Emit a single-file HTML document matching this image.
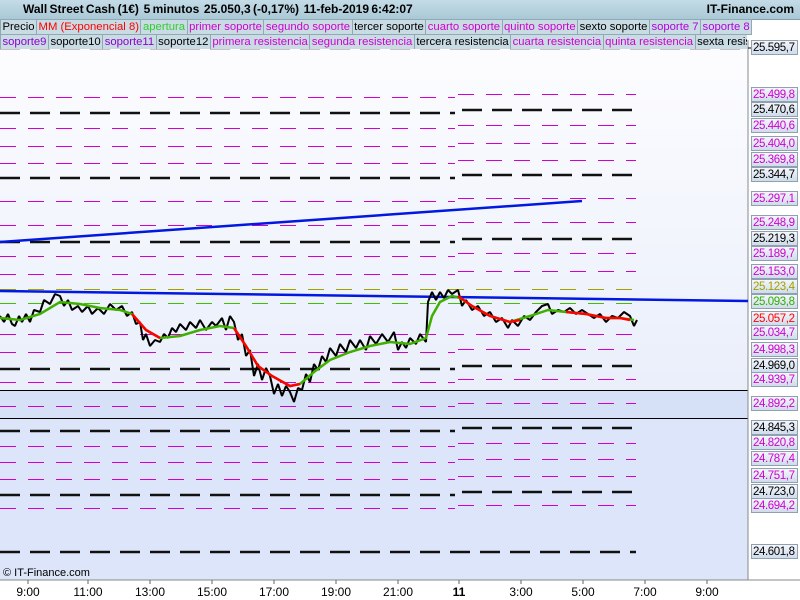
<!DOCTYPE html>
<html><head><meta charset="utf-8"><style>
body{margin:0;width:800px;height:600px;overflow:hidden;font-family:"Liberation Sans",sans-serif;background:#fff;position:relative}
#title{position:absolute;left:0;top:0;width:800px;height:19px;background:linear-gradient(#c4dce6,#a9c8d6);font-weight:bold;font-size:12px;line-height:19px;border-bottom:1px solid #7f9ea8}
.row{position:absolute;left:0;height:15px;font-size:11.3px;line-height:15px;white-space:nowrap}
.row span{display:inline-block;background:#c9dbe3;border:1px solid #8faab4;padding:0 1.5px;margin-right:-1px;height:14px}
.ax{position:absolute;left:751px;width:47px;height:15px;font-size:11.5px;letter-spacing:-0.4px;line-height:15px;text-align:left;padding-left:1px;background:linear-gradient(#f4f6fb,#cfdceb);border:1px solid #8fa0b0;box-sizing:border-box;white-space:nowrap}
.t{position:absolute;top:585px;font-size:12px;transform:translateX(-50%)}
</style></head><body>
<svg width="800" height="600" style="position:absolute;left:0;top:0">
<defs><linearGradient id="bg" x1="0" y1="0" x2="0" y2="1"><stop offset="0" stop-color="#fdfdff"/><stop offset="1" stop-color="#dfe7f8"/></linearGradient></defs>
<rect x="0" y="40" width="748" height="540" fill="url(#bg)"/>
<rect x="0" y="390" width="748" height="28" fill="#d6e1f8"/>
<rect x="0" y="418" width="748" height="162" fill="#dce5f9"/>
<line x1="0" y1="390.5" x2="748" y2="390.5" stroke="#000"/>
<line x1="0" y1="418.5" x2="748" y2="418.5" stroke="#000"/>
<rect x="747.5" y="40" width="1" height="540" fill="#888"/>
<rect x="0" y="579.5" width="800" height="1" fill="#888"/>
<g fill="none">
<g stroke="#111" stroke-width="2.5" stroke-dasharray="20,10">
<line x1="0" y1="48" x2="748" y2="48"/>
<line x1="0" y1="113" x2="455" y2="113"/><line x1="462" y1="110" x2="636" y2="110"/>
<line x1="0" y1="178" x2="455" y2="178"/><line x1="462" y1="175" x2="636" y2="175"/>
<line x1="0" y1="242" x2="455" y2="242"/><line x1="462" y1="239" x2="636" y2="239"/>
<line x1="0" y1="369" x2="455" y2="369"/><line x1="462" y1="366" x2="636" y2="366"/>
<line x1="0" y1="431" x2="455" y2="431"/><line x1="462" y1="428" x2="636" y2="428"/>
<line x1="0" y1="495" x2="455" y2="495"/><line x1="462" y1="492" x2="636" y2="492"/>
<line x1="0" y1="552" x2="636" y2="552"/>
</g>
<g stroke="#d000d0" stroke-width="1" stroke-dasharray="16,12">
<line x1="0" y1="97.5" x2="455" y2="97.5"/><line x1="458" y1="94.5" x2="636" y2="94.5"/>
<line x1="0" y1="128.5" x2="455" y2="128.5"/><line x1="458" y1="125.5" x2="636" y2="125.5"/>
<line x1="0" y1="146.5" x2="455" y2="146.5"/><line x1="458" y1="143.5" x2="636" y2="143.5"/>
<line x1="0" y1="163.5" x2="455" y2="163.5"/><line x1="458" y1="160.5" x2="636" y2="160.5"/>
<line x1="0" y1="201.5" x2="455" y2="201.5"/><line x1="458" y1="198.5" x2="636" y2="198.5"/>
<line x1="0" y1="225.5" x2="455" y2="225.5"/><line x1="458" y1="222.5" x2="636" y2="222.5"/>
<line x1="0" y1="256.5" x2="455" y2="256.5"/><line x1="458" y1="253.5" x2="636" y2="253.5"/>
<line x1="0" y1="274.5" x2="455" y2="274.5"/><line x1="458" y1="271.5" x2="636" y2="271.5"/>
<line x1="0" y1="334.5" x2="636" y2="334.5"/>
<line x1="0" y1="352.5" x2="455" y2="352.5"/><line x1="458" y1="349.5" x2="636" y2="349.5"/>
<line x1="0" y1="382.5" x2="455" y2="382.5"/><line x1="458" y1="379.5" x2="636" y2="379.5"/>
<line x1="0" y1="406.5" x2="455" y2="406.5"/><line x1="458" y1="403.5" x2="636" y2="403.5"/>
<line x1="0" y1="446.5" x2="455" y2="446.5"/><line x1="458" y1="443.5" x2="636" y2="443.5"/>
<line x1="0" y1="462.5" x2="455" y2="462.5"/><line x1="458" y1="459.5" x2="636" y2="459.5"/>
<line x1="0" y1="479.5" x2="455" y2="479.5"/><line x1="458" y1="476.5" x2="636" y2="476.5"/>
<line x1="0" y1="508.5" x2="455" y2="508.5"/><line x1="458" y1="505.5" x2="636" y2="505.5"/>
</g>
<line x1="0" y1="289.5" x2="636" y2="289.5" stroke="#a0a000" stroke-dasharray="16,12"/>
<line x1="0" y1="303.5" x2="636" y2="303.5" stroke="#40c000" stroke-dasharray="16,12"/>
<line x1="0" y1="242" x2="582" y2="201" stroke="#0018e0" stroke-width="2.5"/>
<line x1="0" y1="291" x2="748" y2="301" stroke="#0018e0" stroke-width="2.5"/>
<polyline stroke="#000" stroke-width="2" stroke-linejoin="bevel" points="0,316 4,322 8,314 12,324 15,326 19,316 22,322 26,314 30,322 34,310 40,312 44,300 50,304 55,294 60,296 64,306 68,300 72,310 78,306 82,312 88,306 92,314 98,308 104,314 110,304 116,310 122,306 127,316 132,312 136,324 140,322 143,340 146,334 150,346 155,340 160,342 164,334 168,338 172,328 176,332 180,324 186,330 190,322 196,328 200,320 206,330 212,322 216,326 222,318 226,330 230,316 234,322 238,340 242,334 246,356 250,350 254,376 258,364 262,380 266,368 270,376 274,394 278,384 282,396 286,386 290,392 294,402 298,388 302,390 306,374 310,382 314,364 318,370 322,356 326,362 330,348 336,356 340,344 346,352 350,340 356,348 360,340 366,350 370,336 376,344 382,334 388,342 394,332 398,350 402,342 406,348 410,338 416,344 420,334 426,342 428,302 432,292 436,300 440,292 444,298 448,290 452,294 458,290 462,306 466,300 472,310 478,306 484,316 490,312 496,322 502,318 508,328 512,320 518,326 524,316 530,320 536,312 542,306 548,304 552,314 558,310 564,312 570,308 576,314 582,310 588,314 594,318 600,314 606,322 612,316 618,318 624,312 630,316 634,326 637,320"/>
<polyline stroke="#40b000" stroke-width="2.5" points="0,318 20,320 40,314 60,302 80,304 100,308 120,310 132,314 146,330 160,338 180,336 200,330 220,326 234,328 246,346 258,366 272,376 290,386 300,384 314,372 330,360 350,352 370,346 390,342 410,344 426,338 432,316 440,302 452,296 460,298 472,306 490,316 510,322 530,316 548,310 566,312 586,314 606,318 620,318 634,320"/>
<g stroke="#f00" stroke-width="2.5">
<polyline points="132,314 146,330 160,338"/>
<polyline points="234,328 246,346 258,366 272,376 290,386 300,384"/>
<polyline points="458,296 472,306 490,316 510,322 520,320"/>
<polyline points="566,312 586,314 606,318 620,318 630,320"/>
</g>
</g>
<g stroke="#666">
<line x1="28" y1="580" x2="28" y2="584"/><line x1="88" y1="580" x2="88" y2="584"/><line x1="150" y1="580" x2="150" y2="584"/><line x1="212" y1="580" x2="212" y2="584"/><line x1="274" y1="580" x2="274" y2="584"/><line x1="336" y1="580" x2="336" y2="584"/><line x1="398" y1="580" x2="398" y2="584"/><line x1="459" y1="580" x2="459" y2="584"/><line x1="521" y1="580" x2="521" y2="584"/><line x1="583" y1="580" x2="583" y2="584"/><line x1="645" y1="580" x2="645" y2="584"/><line x1="707" y1="580" x2="707" y2="584"/>
</g>
<g stroke="#000"><line x1="748" y1="48" x2="752" y2="48"/></g>
<rect x="5" y="9" width="5" height="8" fill="#e04040" stroke="#333" stroke-width="0.8"/>
<rect x="12" y="3" width="5" height="11" fill="#40d040" stroke="#333" stroke-width="0.8"/>
</svg>
<div id="title"><span style="position:absolute;left:23px;word-spacing:-1px">Wall Street Cash (1€)&nbsp; 5 minutos&nbsp; 25.050,3 (-0,17%)&nbsp; 11-feb-2019 6:42:07</span><span style="position:absolute;right:6px">IT-Finance.com</span></div>
<div class="row" style="top:19px"><span>Precio</span><span style="color:#f00">MM (Exponencial 8)</span><span style="color:#3c3">apertura</span><span style="color:#d000d0">primer soporte</span><span style="color:#d000d0">segundo soporte</span><span>tercer soporte</span><span style="color:#d000d0">cuarto soporte</span><span style="color:#d000d0">quinto soporte</span><span>sexto soporte</span><span style="color:#b000e0">soporte 7</span><span style="color:#b000e0">soporte 8</span></div>
<div class="row" style="top:34px;width:747px;overflow:hidden"><span style="color:#9000d0">soporte9</span><span>soporte10</span><span style="color:#9000d0">soporte11</span><span>soporte12</span><span style="color:#d000d0">primera resistencia</span><span style="color:#d000d0">segunda resistencia</span><span>tercera resistencia</span><span style="color:#d000d0">cuarta resistencia</span><span style="color:#d000d0">quinta resistencia</span><span>sexta resistencia</span></div>
<div class="ax" style="top:40px">25.595,7</div>
<div class="ax" style="top:87px;color:#d000d0">25.499,8</div>
<div class="ax" style="top:102px">25.470,6</div>
<div class="ax" style="top:118px;color:#d000d0">25.440,6</div>
<div class="ax" style="top:136px;color:#d000d0">25.404,0</div>
<div class="ax" style="top:152px;color:#d000d0">25.369,8</div>
<div class="ax" style="top:167px">25.344,7</div>
<div class="ax" style="top:191px;color:#d000d0">25.297,1</div>
<div class="ax" style="top:215px;color:#d000d0">25.248,9</div>
<div class="ax" style="top:231px">25.219,3</div>
<div class="ax" style="top:246px;color:#d000d0">25.189,7</div>
<div class="ax" style="top:264px;color:#d000d0">25.153,0</div>
<div class="ax" style="top:279px;color:#a0a000">25.123,4</div>
<div class="ax" style="top:294px;color:#30b000">25.093,8</div>
<div class="ax" style="top:311px;color:#f00">25.057,2</div>
<div class="ax" style="top:325px;color:#d000d0">25.034,7</div>
<div class="ax" style="top:342px;color:#d000d0">24.998,3</div>
<div class="ax" style="top:358px">24.969,0</div>
<div class="ax" style="top:372px;color:#d000d0">24.939,7</div>
<div class="ax" style="top:396px;color:#d000d0">24.892,2</div>
<div class="ax" style="top:420px">24.845,3</div>
<div class="ax" style="top:435px;color:#d000d0">24.820,8</div>
<div class="ax" style="top:451px;color:#d000d0">24.787,4</div>
<div class="ax" style="top:468px;color:#d000d0">24.751,7</div>
<div class="ax" style="top:484px">24.723,0</div>
<div class="ax" style="top:498px;color:#d000d0">24.694,2</div>
<div class="ax" style="top:544px">24.601,8</div>
<div style="position:absolute;left:3px;top:567px;font-size:11px">© IT-Finance.com</div>
<div class="t" style="left:28px">9:00</div><div class="t" style="left:88px">11:00</div><div class="t" style="left:150px">13:00</div><div class="t" style="left:212px">15:00</div><div class="t" style="left:274px">17:00</div><div class="t" style="left:336px">19:00</div><div class="t" style="left:398px">21:00</div><div class="t" style="left:459px;font-weight:bold">11</div><div class="t" style="left:521px">3:00</div><div class="t" style="left:583px">5:00</div><div class="t" style="left:645px">7:00</div><div class="t" style="left:707px">9:00</div>
</body></html>
